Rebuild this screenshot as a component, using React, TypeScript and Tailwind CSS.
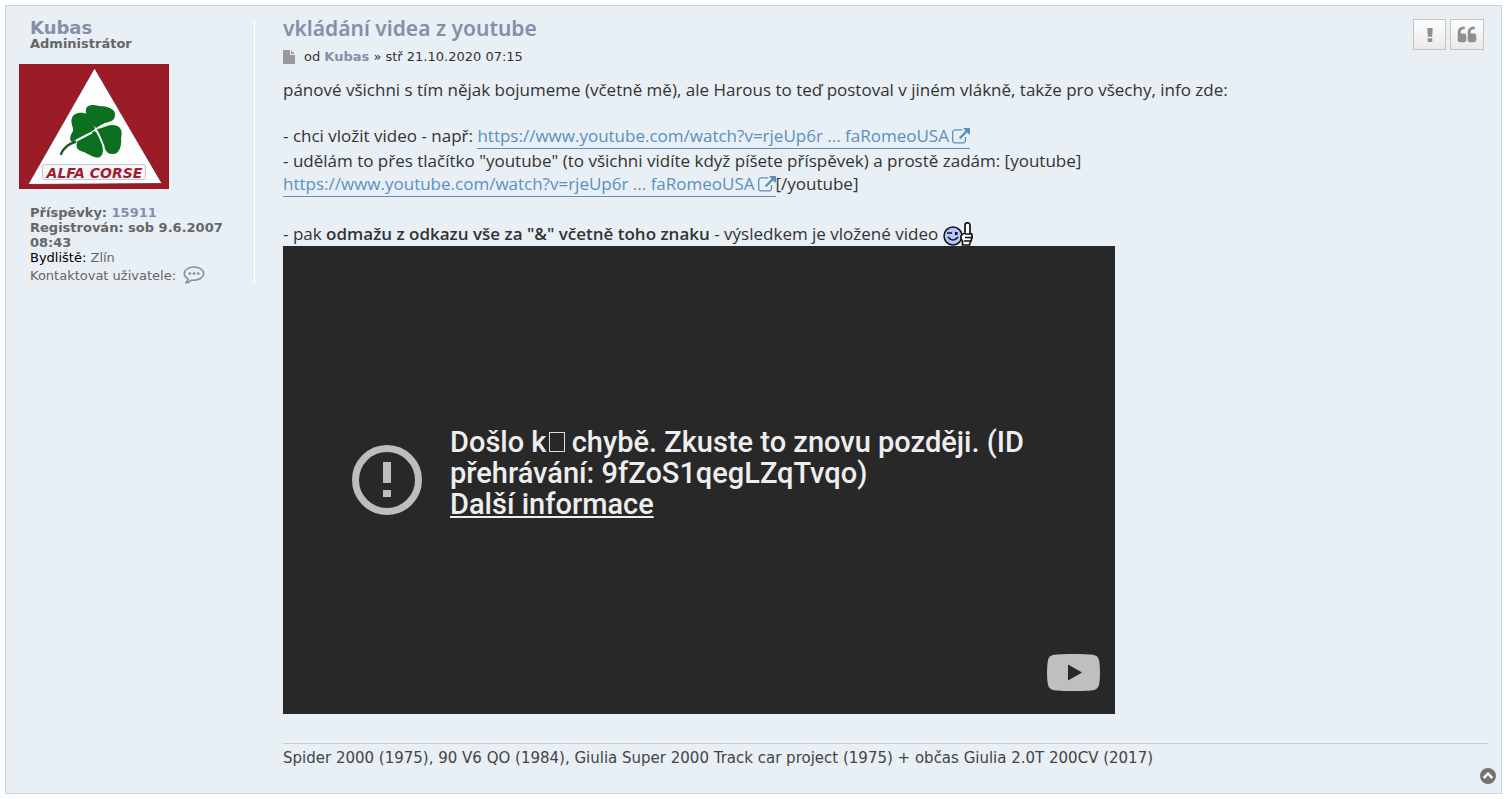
import type { ReactNode } from 'react';

const VIDEO_URL = 'https://www.youtube.com/watch?v=rjeUp6r';

function FileIcon() {
  return (
    <svg viewBox="0 0 1536 1792" className="h-[14px] w-3 shrink-0" fill="#9a9a9a" aria-hidden="true">
      <path d="M1024 512v-472q22 14 36 28l408 408q14 14 28 36h-472zm-128 32q0 40 28 68t68 28h544v1056q0 40-28 68t-68 28h-1344q-40 0-68-28t-28-68v-1600q0-40 28-68t68-28h800v544z" />
    </svg>
  );
}

function ExternalIcon() {
  return (
    <svg viewBox="0 0 1792 1792" className="ml-[3px] inline-block size-[18px] align-[-4px]" fill="currentColor" aria-hidden="true">
      <path d="M1408 928v320q0 119-84.5 203.5t-203.5 84.5h-832q-119 0-203.5-84.5t-84.5-203.5v-832q0-119 84.5-203.5t203.5-84.5h704q14 0 23 9t9 23v64q0 14-9 23t-23 9h-704q-66 0-113 47t-47 113v832q0 66 47 113t113 47h832q66 0 113-47t47-113v-320q0-14 9-23t23-9h64q14 0 23 9t9 23zm384-864v512q0 26-19 45t-45 19-45-19l-176-176-652 652q-10 10-23 10t-23-10l-114-114q-10-10-10-23t10-23l652-652-176-176q-19-19-19-45t19-45 45-19h512q26 0 45 19t19 45z" />
    </svg>
  );
}

function QuoteIcon() {
  return (
    <svg viewBox="0 0 1792 1792" className="size-5" fill="#8f8f8f" aria-hidden="true">
      <path d="M832 960v384q0 80-56 136t-136 56h-384q-80 0-136-56t-56-136v-704q0-104 40.5-198.5t109.5-163.5 163.5-109.5 198.5-40.5h64q26 0 45 19t19 45v128q0 26-19 45t-45 19h-64q-106 0-181 75t-75 181v32q0 40 28 68t68 28h224q80 0 136 56t56 136z" />
      <path d="M1728 960v384q0 80-56 136t-136 56h-384q-80 0-136-56t-56-136v-704q0-104 40.5-198.5t109.5-163.5 163.5-109.5 198.5-40.5h64q26 0 45 19t19 45v128q0 26-19 45t-45 19h-64q-106 0-181 75t-75 181v32q0 40 28 68t68 28h224q80 0 136 56t56 136z" />
    </svg>
  );
}

function ExclamationIcon() {
  return (
    <svg viewBox="0 0 8 16" className="h-4 w-2" fill="#8f8f8f" aria-hidden="true">
      <path d="M1.900 1h4.200q.6 0 .6.6l-.5 7.600q0 .6-.6.6H2.400q-.6 0-.6-.6L1.300 1.600q0-.6.6-.6z" />
      <rect x="1.700" y="11.200" width="4.600" height="3.800" rx=".7" />
    </svg>
  );
}

function BubbleIcon() {
  return (
    <svg viewBox="0 0 22 20" className="h-5 w-[22px]" aria-hidden="true">
      <path
        d="M11 2C5.700 2 1.300 4.900 1.300 8.600c0 2.200 1.500 4.100 3.900 5.300-.3 1.700-1.200 2.900-2.300 4 2.300-.3 4.200-1.300 5.700-2.900.8.100 1.600.200 2.400.200 5.300 0 9.700-2.900 9.700-6.600S16.300 2 11 2z"
        fill="none"
        stroke="#8490aa"
        strokeWidth="1.600"
        strokeLinejoin="round"
      />
      <g fill="#8490aa">
        <circle cx="6.800" cy="8.600" r="1.400" />
        <circle cx="11" cy="8.600" r="1.400" />
        <circle cx="15.200" cy="8.600" r="1.400" />
      </g>
    </svg>
  );
}

function Avatar() {
  return (
    <svg viewBox="0 0 150 125" className="block h-[125px] w-[150px]" role="img" aria-label="Alfa Corse">
      <rect width="150" height="125" fill="#9b1c27" />
      <path d="M75.500 4L143 119.500 9 120.500z" fill="#fdfdfd" stroke="#6d1a35" strokeWidth=".8" />
      <g fill="#0b7121">
        <path d="M77 64C69 56 66 50 67 45c1-4 6-5 13-3 8 0 17 3 16 9 0 6-6 7-10 8-4 2-6 3-9 5z" />
        <path d="M76 65c-2-6-3-12-8-15-5-2-13-2-15 4-2 6 2 9 1 13-3 5-5 10 1 12 8-1 13-8 21-14z" />
        <path d="M78 65c7-1 10-4 15-4 9 0 11 6 9 13 1 8-2 17-9 16-6 0-7-5-9-11-2-5-4-9-6-14z" />
        <path d="M76 67c-7 3-11 4-15 8-6 5-4 12 4 13 6 3 12 7 16 5 4-3 3-8 2-13-2-5-3-8-7-13z" />
      </g>
      <path d="M73 68.500Q62 74 55 78" fill="none" stroke="#fdfdfd" strokeWidth="2" />
      <path d="M56 78C49 80 45 83 42 90" fill="none" stroke="#23562c" strokeWidth="2.400" strokeLinecap="round" />
      <path d="M80 63.500l15-6M79 69l6 14" stroke="#f2f8f1" strokeWidth="1.800" />
      <rect x="23.500" y="100.500" width="103" height="15" rx="2" fill="#f5f5f7" stroke="#c3c7d2" />
      <text
        x="75.500"
        y="113.500"
        textAnchor="middle"
        fontFamily="DejaVu Sans, sans-serif"
        fontSize="14"
        fontWeight="bold"
        fontStyle="italic"
        fill="#a21c30"
      >
        ALFA CORSE
      </text>
    </svg>
  );
}

function ThumbSmiley() {
  return (
    <svg viewBox="0 0 30 24" className="inline-block h-6 w-[30px] align-[-6px]" role="img" aria-label="palec nahoru">
      <circle cx="10" cy="14" r="9" fill="#b5c2fb" stroke="#111" strokeWidth="1.500" />
      <path d="M4 11h5M5 15q5 6 10 0" fill="none" stroke="#111" strokeWidth="1.500" />
      <rect x="12" y="10" width="2.500" height="3" fill="#111" />
      <path
        d="M22 11V3q0-2.200 2.500-2.200T27 3v8q2.200.5 2.200 3t-.7 3q0 2-1 3t-1 3h-7v-4q-2-2-1.500-5 1-2 4-3z"
        fill="#fff"
        stroke="#111"
        strokeWidth="1.700"
      />
      <path d="M22 12h6M22 15.500h7M21 19h7" stroke="#111" strokeWidth="1.400" />
    </svg>
  );
}

function VideoLink() {
  return (
    <a href={VIDEO_URL} className="inline-block border-b border-[#5c8fbe] pb-px align-top text-[#5c8fbe]">
      {VIDEO_URL} ... faRomeoUSA
      <ExternalIcon />
    </a>
  );
}

function ToolButton({ label, children }: { label: string; children: ReactNode }) {
  return (
    <button
      type="button"
      aria-label={label}
      className="flex h-[31px] min-w-[33px] items-center justify-center border border-[#c7c3bf] bg-linear-to-b from-white to-[#e9e9e9] px-1.5"
    >
      {children}
    </button>
  );
}

function Profile() {
  return (
    <aside className="w-[236px] shrink-0 self-start border-r border-white pl-[11px] font-['DejaVu_Sans',sans-serif] text-[13px] leading-[15px] text-[#666]">
      <a href="#kubas" className="block text-lg leading-[17px] font-bold text-[#8490aa]">
        Kubas
      </a>
      <p className="font-bold">Administrátor</p>
      <div className="mt-[13px] mb-4 -ml-[11px]">
        <Avatar />
      </div>
      <p className="font-bold">
        Příspěvky: <a href="#posts" className="text-[#8490aa]">15911</a>
      </p>
      <p className="font-bold">Registrován: sob 9.6.2007 08:43</p>
      <p>
        <span className="text-black">Bydliště:</span> Zlín
      </p>
      <div className="flex items-center gap-[7px]">
        <span>Kontaktovat uživatele:</span>
        <a href="#contact" aria-label="Kontaktovat uživatele" className="block">
          <BubbleIcon />
        </a>
      </div>
    </aside>
  );
}

function VideoError() {
  return (
    <section className="relative flex aspect-video w-full max-w-[832px] items-center bg-[#282828] pr-20 pl-[69px] font-['Roboto',sans-serif] text-[29px] leading-[31px] font-medium text-[#eee]">
      <svg viewBox="0 0 70 70" className="size-[70px] shrink-0" aria-hidden="true">
        <circle cx="35" cy="35" r="31.500" fill="none" stroke="#bdbdbd" strokeWidth="7" />
        <path d="M31 17h8v21h-8zM31 45h8v7h-8z" fill="#bdbdbd" />
      </svg>
      <div className="-mt-3.5 ml-7">
        <p>
          Došlo k<span className="ml-0.5 inline-block h-5 w-4 border border-[#ddd]" /> chybě. Zkuste to znovu později. (ID
          <br />
          přehrávání: 9fZoS1qegLZqTvqo)
        </p>
        <a href={VIDEO_URL} className="underline decoration-2 underline-offset-2">
          Další informace
        </a>
      </div>
      <a href={VIDEO_URL} aria-label="YouTube" className="absolute right-[15px] bottom-[23px]">
        <svg viewBox="0 0 53 37" className="h-[37px] w-[53px]" aria-hidden="true">
          <path d="M26.500 0C36 0 44 .3 47 1.100 50 1.900 51.300 3.600 52 6c1.300 7 1.300 18 0 25-.7 2.400-2 4.100-5 4.900C44 36.700 36 37 26.500 37S9 36.700 6 35.900C3 35.100 1.700 33.400 1 31c-1.300-7-1.300-18 0-25C1.700 3.600 3 1.900 6 1.100 9 .3 17 0 26.500 0z" fill="#bfbfbf" />
          <path d="M21 10.500l14 8-14 8z" fill="#282828" />
        </svg>
      </a>
    </section>
  );
}

export default function App() {
  return (
    <main className="bg-white pt-[5px] pr-2.5 pb-[5px] pl-[5px]">
      <article className="relative flex border border-[#c3d6e4] bg-[#e8eff5] pt-[13px] pr-[13px] pl-[13px]">
        <Profile />
        <div className="ml-7 min-w-0 flex-1 pb-[25px]">
          <header className="flex justify-between">
            <div>
              <h3 className="font-['Noto_Sans','Open_Sans',sans-serif] text-[21px] leading-[18px] font-semibold text-[#8490aa]">
                <a href="#post">vkládání videa z youtube</a>
              </h3>
              <p className="mt-3 flex items-center font-['DejaVu_Sans',sans-serif] text-[13px] leading-4 text-[#333]">
                <FileIcon />
                <span className="ml-[9px]">
                  od <a href="#kubas" className="font-bold text-[#8490aa]">Kubas</a> » stř 21.10.2020 07:15
                </span>
              </p>
            </div>
            <div className="mr-1 flex gap-1">
              <ToolButton label="Nahlásit příspěvek">
                <ExclamationIcon />
              </ToolButton>
              <ToolButton label="Citovat">
                <QuoteIcon />
              </ToolButton>
            </div>
          </header>

          <div className="mt-[13px] font-['Open_Sans','Noto_Sans',sans-serif] text-[17px] leading-[23px] text-[#333]">
            <p>pánové všichni s tím nějak bojumeme (včetně mě), ale Harous to teď postoval v jiném vlákně, takže pro všechy, info zde:</p>
            <p className="mt-[23px]">
              - chci vložit video - např: <VideoLink />
            </p>
            <p>- udělám to přes tlačítko "youtube" (to všichni vidíte když píšete příspěvek) a prostě zadám: [youtube]</p>
            <p>
              <VideoLink />
              [/youtube]
            </p>
            <p className="mt-6 leading-[25px]">
              - pak <strong className="font-semibold">odmažu z odkazu vše za "&amp;" včetně toho znaku</strong> - výsledkem je vložené video <ThumbSmiley />
            </p>
          </div>

          <VideoError />

          <footer className="mt-[29px] border-t border-[#ccc] pt-1 font-['DejaVu_Sans',sans-serif] text-[15px] leading-5 text-[#444]">
            Spider 2000 (1975), 90 V6 QO (1984), Giulia Super 2000 Track car project (1975) + občas Giulia 2.0T 200CV (2017)
          </footer>
        </div>
        <a href="#top" aria-label="Nahoru" className="absolute right-[5px] bottom-[9px]">
          <svg viewBox="0 0 16 16" className="size-4" aria-hidden="true">
            <circle cx="8" cy="8" r="8" fill="#737373" />
            <path d="M3.700 10L8 5.700l4.300 4.300" fill="none" stroke="#f5f5f5" strokeWidth="2.600" />
          </svg>
        </a>
      </article>
    </main>
  );
}
